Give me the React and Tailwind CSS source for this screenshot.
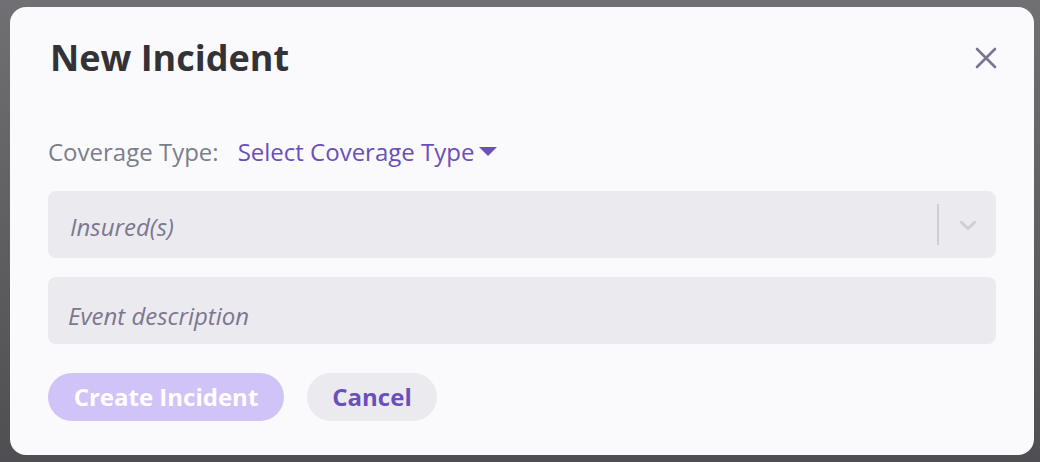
export default function App() {
  return (
    <div
      className="flex h-[462px] w-[1040px] bg-gradient-to-b from-[#706f74] to-[#4f4e53] pl-[10px] pr-[6px] pt-[7px] pb-[7px]"
      style={{ fontFamily: '"Open Sans", "Noto Sans", sans-serif' }}
    >
      <div className="flex flex-1 flex-col rounded-[16px] bg-[#fafafc] px-[38px] pt-[31px]">
        <div className="flex h-[40px] items-center justify-between pl-[2px]">
          <h1 className="text-[36px] font-bold leading-[40px] text-[#333236]">New Incident</h1>
          <button className="mr-[-1px] text-[#7b7590]">
            <svg width="22" height="22" viewBox="0 0 22 22">
              <path d="M2 2L20 20M20 2L2 20" stroke="currentColor" strokeWidth="2.6" strokeLinecap="round" />
            </svg>
          </button>
        </div>

        <div className="mt-[58px] flex items-center gap-[19px] text-[24px] leading-[32px]">
          <span className="text-[#7a7e8d]">Coverage Type:</span>
          <button className="flex items-center gap-[5px] text-[#6b4fbb]">
            Select Coverage Type
            <svg width="18" height="10" viewBox="0 0 18 10">
              <path d="M0 0h18L9 9z" fill="#6b4fbb" />
            </svg>
          </button>
        </div>

        <div className="mt-[23px] flex h-[67px] items-center rounded-[8px] bg-[#ebeaef]">
          <span className="flex-1 pl-[22px] pt-[4px] text-[24px] italic text-[#7d7690]">Insured(s)</span>
          <div className="h-[41px] w-[2px] bg-[#cfcfd2]" />
          <div className="flex w-[57px] justify-center">
            <svg width="20" height="12" viewBox="0 0 20 12">
              <path d="M2.5 2.5L10 9.5L17.5 2.5" fill="none" stroke="#cfcfd2" strokeWidth="3" />
            </svg>
          </div>
        </div>

        <div className="mt-[19px] flex h-[67px] items-center rounded-[8px] bg-[#ebeaef] pl-[20px]">
          <span className="pt-[10px] text-[24px] italic text-[#7d7690]">Event description</span>
        </div>

        <div className="mt-[29px] flex gap-[23px]">
          <button className="h-[48px] w-[236px] rounded-full bg-[#d0c3f8] text-[24px] font-bold text-white">
            Create Incident
          </button>
          <button className="h-[48px] w-[130px] rounded-full bg-[#ebeaef] text-[24px] font-bold text-[#6b4fbb]">
            Cancel
          </button>
        </div>
      </div>
    </div>
  );
}
